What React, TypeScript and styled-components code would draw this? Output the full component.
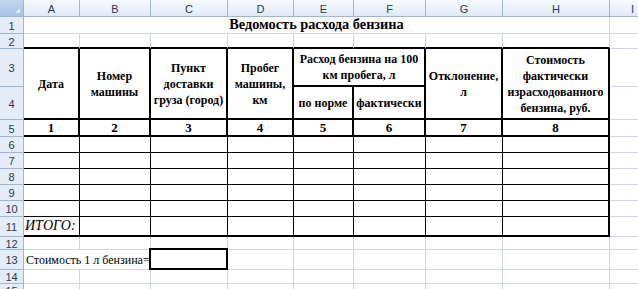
import React from 'react';
import styled, { createGlobalStyle } from 'styled-components';

const GlobalStyle = createGlobalStyle`
  html, body { margin: 0; padding: 0; background: #ffffff; overflow: hidden; }
  body { width: 638px; height: 289px; }
`;

const COLS = [24, 56, 71, 77, 66, 60, 72, 77, 107, 46];
const ROWS = [17, 17, 15, 38, 33, 17, 16, 16, 16, 16, 16, 20, 13, 20, 14, 14];

type Line = 'grid' | 'thin' | 'thick';
const line = (l: Line) =>
  l === 'thick' ? '2px solid #000000' : l === 'thin' ? '1px solid #000000' : '1px solid #d0d7e5';

const Sheet = styled.div`
  display: grid;
  grid-template-columns: ${COLS.map((w) => `${w}px`).join(' ')};
  grid-template-rows: ${ROWS.map((h) => `${h}px`).join(' ')};
  font-family: "Liberation Serif", "Times New Roman", serif;
  color: #000000;
`;

const HeaderBase = styled.div`
  box-sizing: border-box;
  border-right: 1px solid #9eb6ce;
  border-bottom: 1px solid #9eb6ce;
  font-family: "Liberation Sans", Arial, sans-serif;
  font-size: 11px;
  color: #2a3a52;
  display: flex;
  align-items: center;
  justify-content: center;
`;

const Corner = styled(HeaderBase)`
  grid-column: 1;
  grid-row: 1;
  position: relative;
  background: linear-gradient(#c3d5ee, #a9c3e8);
  &::after {
    content: '';
    position: absolute;
    right: 3px;
    bottom: 3px;
    width: 0;
    height: 0;
    border-left: 5px solid transparent;
    border-bottom: 5px solid #e8eef7;
  }
`;

const ColHead = styled(HeaderBase)<{ $col: number }>`
  grid-column: ${(p) => p.$col};
  grid-row: 1;
  padding-top: 1px;
  background: linear-gradient(#f8fafd 0%, #eef3fa 45%, #dfe8f4 100%);
`;

const RowHead = styled(HeaderBase)<{ $row: number }>`
  grid-column: 1;
  grid-row: ${(p) => p.$row};
  background: #e4ecf7;
  padding-top: 1px;
`;

const Cell = styled.div<{ $col: number; $row: number; $cs?: number; $rs?: number; $r?: Line; $b?: Line }>`
  box-sizing: border-box;
  grid-column: ${(p) => p.$col} / span ${(p) => p.$cs ?? 1};
  grid-row: ${(p) => p.$row} / span ${(p) => p.$rs ?? 1};
  border-right: ${(p) => line(p.$r ?? 'grid')};
  border-bottom: ${(p) => line(p.$b ?? 'grid')};
  min-width: 0;
  display: flex;
  white-space: nowrap;
`;

const TitleCell = styled(Cell)`
  justify-content: center;
  align-items: flex-end;
  font-weight: bold;
  font-size: 14.3px;
  line-height: 16px;
  padding-bottom: 1px;
`;

const HeadCell = styled(Cell)`
  justify-content: center;
  align-items: center;
  text-align: center;
  font-weight: bold;
  font-size: 12px;
  line-height: 16px;
`;

const NumCell = styled(Cell)`
  justify-content: center;
  align-items: center;
  font-weight: bold;
  font-size: 13px;
  line-height: 15px;
`;

const TotalCell = styled(Cell)`
  align-items: flex-end;
  font-style: italic;
  font-size: 14px;
  line-height: 16px;
  padding-left: 1px;
  padding-bottom: 1px;
`;

const NoteCell = styled(Cell)`
  align-items: flex-end;
  font-size: 12px;
  line-height: 15px;
  padding-left: 2px;
  padding-bottom: 1px;
`;

const BoxCell = styled(Cell)`
  position: relative;
  &::after {
    content: '';
    position: absolute;
    left: -2px;
    top: -2px;
    right: -1px;
    bottom: -1px;
    border: 2px solid #000000;
  }
`;

const LETTERS = ['A', 'B', 'C', 'D', 'E', 'F', 'G', 'H', 'I'];
const HEAD_TEXT: { col: number; cs?: number; rs?: number; row: number; lines: string[] }[] = [
  { col: 2, row: 4, rs: 2, lines: ['Дата'] },
  { col: 3, row: 4, rs: 2, lines: ['Номер', 'машины'] },
  { col: 4, row: 4, rs: 2, lines: ['Пункт', 'доставки', 'груза (город)'] },
  { col: 5, row: 4, rs: 2, lines: ['Пробег', 'машины,', 'км'] },
  { col: 6, row: 4, cs: 2, lines: ['Расход бензина на 100', 'км пробега, л'] },
  { col: 6, row: 5, lines: ['по норме'] },
  { col: 7, row: 5, lines: ['фактически'] },
  { col: 8, row: 4, rs: 2, lines: ['Отклонение,', 'л'] },
  { col: 9, row: 4, rs: 2, lines: ['Стоимость', 'фактически', 'израсходованного', 'бензина, руб.'] },
];

const range = (a: number, b: number) => Array.from({ length: b - a + 1 }, (_, i) => a + i);

export default function App() {
  return (
    <>
      <GlobalStyle />
      <Sheet>
        <Corner />
        {LETTERS.map((l, i) => (
          <ColHead key={l} $col={i + 2}>{l}</ColHead>
        ))}
        {range(1, 15).map((n) => (
          <RowHead key={n} $row={n + 1}>{n}</RowHead>
        ))}

        {/* row 1 */}
        <TitleCell $col={2} $row={2} $cs={8}>Ведомость расхода бензина</TitleCell>
        <Cell $col={10} $row={2} />

        {/* row 2 */}
        {range(2, 9).map((c) => (
          <Cell key={`r2-${c}`} $col={c} $row={3} $b="thick" />
        ))}
        <Cell $col={10} $row={3} />

        {/* rows 3-4 */}
        {HEAD_TEXT.map((h) => (
          <HeadCell key={`h-${h.col}-${h.row}`} $col={h.col} $row={h.row} $cs={h.cs} $rs={h.rs} $r="thick" $b="thick">
            <div>
              {h.lines.map((t, i) => (
                <div key={i}>{t}</div>
              ))}
            </div>
          </HeadCell>
        ))}
        <Cell $col={10} $row={4} />
        <Cell $col={10} $row={5} />

        {/* row 5 */}
        {range(1, 8).map((n) => (
          <NumCell key={`n-${n}`} $col={n + 1} $row={6} $r="thick" $b="thick">{n}</NumCell>
        ))}
        <Cell $col={10} $row={6} />

        {/* rows 6-10 */}
        {range(7, 11).map((r) => (
          <React.Fragment key={`d-${r}`}>
            {range(2, 8).map((c) => (
              <Cell key={c} $col={c} $row={r} $r="thin" $b="thin" />
            ))}
            <Cell $col={9} $row={r} $r="thick" $b="thin" />
            <Cell $col={10} $row={r} />
          </React.Fragment>
        ))}

        {/* row 11 */}
        <TotalCell $col={2} $row={12} $r="thin" $b="thick">ИТОГО:</TotalCell>
        {range(3, 8).map((c) => (
          <Cell key={`t-${c}`} $col={c} $row={12} $r="thin" $b="thick" />
        ))}
        <Cell $col={9} $row={12} $r="thick" $b="thick" />
        <Cell $col={10} $row={12} />

        {/* row 12 */}
        {range(2, 10).map((c) => (
          <Cell key={`e12-${c}`} $col={c} $row={13} />
        ))}

        {/* row 13 */}
        <NoteCell $col={2} $row={14} $cs={2}>Стоимость 1 л бензина=</NoteCell>
        <BoxCell $col={4} $row={14} />
        {range(5, 10).map((c) => (
          <Cell key={`e13-${c}`} $col={c} $row={14} />
        ))}

        {/* rows 14-15 */}
        {[15, 16].map((r) =>
          range(2, 10).map((c) => <Cell key={`e${r}-${c}`} $col={c} $row={r} />)
        )}
      </Sheet>
    </>
  );
}
